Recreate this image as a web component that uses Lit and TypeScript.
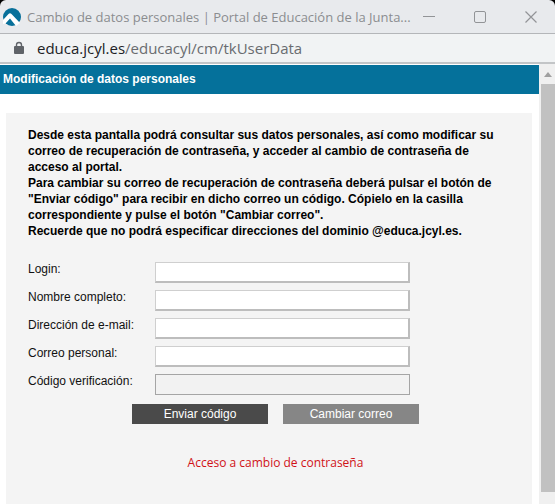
import { LitElement, html, css } from "lit";
import { customElement } from "lit/decorators.js";

interface Field {
  id: string;
  label: string;
  muted?: boolean;
}

const FIELDS: Field[] = [
  { id: "login", label: "Login:" },
  { id: "name", label: "Nombre completo:" },
  { id: "email", label: "Dirección de e-mail:" },
  { id: "personal", label: "Correo personal:" },
  { id: "code", label: "Código verificación:", muted: true },
];

@customElement("window-bar")
class WindowBar extends LitElement {
  static styles = css`
    :host {
      display: block;
      background: #000;
      font-family: "Open Sans", "Noto Sans", sans-serif;
    }
    .title {
      display: flex;
      align-items: center;
      height: 33px;
      padding: 0 17px 0 3px;
      border-bottom: 1px solid #b4b6b9;
      border-radius: 6px 6px 0 0;
      background: #e8eaed;
      color: #8b8d90;
      font-size: 13px;
    }
    .logo {
      flex: none;
      margin-right: 6px;
    }
    .text {
      flex: 1;
      min-width: 0;
      overflow: hidden;
      white-space: nowrap;
    }
    .controls {
      display: flex;
      gap: 37px;
    }
    button {
      display: flex;
      padding: 0;
      border: 0;
      background: none;
    }
    .address {
      display: flex;
      align-items: center;
      gap: 12px;
      height: 28px;
      padding-left: 13px;
      border-bottom: 2px solid #c3c5c7;
      background: #f1f3f4;
      color: #696c70;
      font-size: 15px;
    }
    .host {
      color: #202124;
    }
  `;

  render() {
    return html`
      <div class="title">
        <svg class="logo" width="18" height="18" viewBox="0 0 18 18">
          <circle cx="9" cy="9" r="9" fill="#08709a" />
          <path d="M0 12 L5.5 6 Q7 4.5 8.5 6 L17 15 L13 18 L7 10.5 L2.5 15.5 L0 16 Z" fill="#fff" />
        </svg>
        <span class="text">Cambio de datos personales | Portal de Educación de la Junta...</span>
        <div class="controls">
          <button aria-label="Minimizar">
            <svg width="14" height="14" viewBox="0 0 14 14"><path d="M1 6.5H13" stroke="#929497" /></svg>
          </button>
          <button aria-label="Maximizar">
            <svg width="14" height="14" viewBox="0 0 14 14">
              <rect x="1.5" y="1.5" width="11" height="11" rx="1.5" fill="none" stroke="#929497" />
            </svg>
          </button>
          <button aria-label="Cerrar">
            <svg width="14" height="14" viewBox="0 0 14 14">
              <path d="M1.5 1.5L12.5 12.5M12.5 1.5L1.5 12.5" stroke="#929497" stroke-width="1.2" />
            </svg>
          </button>
        </div>
      </div>
      <div class="address">
        <svg width="12" height="14" viewBox="0 0 12 14">
          <path d="M3.5 6V4a2.5 2.5 0 0 1 5 0V6" fill="none" stroke="#5f6368" stroke-width="1.4" />
          <rect x="1" y="5" width="10" height="8" rx="1" fill="#5f6368" />
        </svg>
        <span><span class="host">educa.jcyl.es</span>/educacyl/cm/tkUserData</span>
      </div>
    `;
  }
}

@customElement("data-form")
class DataForm extends LitElement {
  static styles = css`
    :host {
      display: block;
    }
    .panel {
      box-sizing: border-box;
      min-width: 0;
      min-height: 100%;
      padding: 14px 22px;
      background: #f4f4f4;
    }
    .intro {
      margin: 0 0 23px;
      color: #000;
      font-size: 12px;
      font-weight: bold;
      line-height: 16px;
      white-space: nowrap;
    }
    .fields {
      display: flex;
      flex-direction: column;
      gap: 7px;
    }
    .row {
      display: grid;
      grid-template-columns: 127px minmax(0, 255px);
      align-items: start;
    }
    label {
      font-size: 12px;
      line-height: 14px;
      white-space: nowrap;
    }
    input {
      box-sizing: border-box;
      width: 100%;
      height: 21px;
      margin: 0;
      padding: 1px 4px;
      border: 1px solid;
      border-width: 1px 2px 2px 1px;
      border-color: #cfcfcf #bdbdbd #bdbdbd #cfcfcf;
      background: #fff;
      font: 12px "Liberation Sans", Arial, sans-serif;
    }
    .muted {
      border-width: 1px;
      border-color: #a5a5a5;
      background: #f2f2f2;
    }
    .actions {
      display: flex;
      gap: 15px;
      margin: 9px 0 31px 104px;
    }
    .actions button {
      width: 136px;
      height: 20px;
      padding: 0;
      border: 0;
      background: #4a4a4a;
      color: #fff;
      font: 12px "Liberation Sans", Arial, sans-serif;
    }
    .actions .secondary {
      background: #868686;
    }
    .link {
      margin: 0 0 0 13px;
      text-align: center;
      font: 12px/16px "Open Sans", "Noto Sans", sans-serif;
    }
    a {
      color: #d01217;
      text-decoration: none;
    }
  `;

  render() {
    return html`
      <form class="panel">
        <p class="intro">
          Desde esta pantalla podrá consultar sus datos personales, así como modificar su<br />
          correo de recuperación de contraseña, y acceder al cambio de contraseña de<br />
          acceso al portal.<br />
          Para cambiar su correo de recuperación de contraseña deberá pulsar el botón de<br />
          "Enviar código" para recibir en dicho correo un código. Cópielo en la casilla<br />
          correspondiente y pulse el botón "Cambiar correo".<br />
          Recuerde que no podrá especificar direcciones del dominio @educa.jcyl.es.
        </p>
        <div class="fields">
          ${FIELDS.map(
            (f) => html`
              <div class="row">
                <label for=${f.id}>${f.label}</label>
                <input id=${f.id} class=${f.muted ? "muted" : ""} type="text" />
              </div>
            `
          )}
        </div>
        <div class="actions">
          <button type="button">Enviar código</button>
          <button type="button" class="secondary">Cambiar correo</button>
        </div>
        <p class="link"><a href="#password">Acceso a cambio de contraseña</a></p>
      </form>
    `;
  }
}

@customElement("app-root")
class AppRoot extends LitElement {
  static styles = css`
    :host {
      display: flex;
      flex-direction: column;
      min-height: 100vh;
      background: #fff;
      color: #111;
      font-family: "Liberation Sans", Arial, sans-serif;
    }
    .body {
      display: flex;
      flex: 1;
    }
    .page {
      display: flex;
      flex: 1;
      flex-direction: column;
      min-width: 0;
      padding-top: 1px;
    }
    h1 {
      margin: 0;
      padding: 0 3px;
      background: #05719b;
      color: #fff;
      font-size: 12px;
      line-height: 29px;
    }
    data-form {
      display: grid;
      flex: 1;
      margin: 19px 7px 0 6px;
    }
    .scrollbar {
      display: flex;
      flex-direction: column;
      width: 14px;
      padding: 0 0 12px 2px;
      background: #f0f0f0;
    }
    .arrow {
      display: flex;
      align-items: center;
      justify-content: center;
      height: 20px;
    }
    .thumb {
      flex: 1;
      background: #c1c1c1;
    }
  `;

  render() {
    return html`
      <window-bar></window-bar>
      <div class="body">
        <main class="page">
          <h1>Modificación de datos personales</h1>
          <data-form></data-form>
        </main>
        <div class="scrollbar">
          <div class="arrow">
            <svg width="8" height="5" viewBox="0 0 8 5"><path d="M4 0L8 5H0Z" fill="#a0a0a0" /></svg>
          </div>
          <div class="thumb"></div>
        </div>
      </div>
    `;
  }
}
